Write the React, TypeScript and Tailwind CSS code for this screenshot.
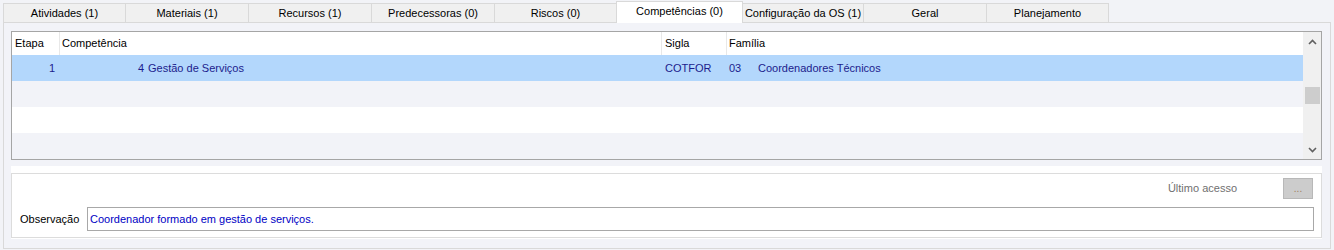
const tabs = [
  { label: "Atividades (1)", w: "w-[123px]" },
  { label: "Materiais (1)", w: "w-[124px]" },
  { label: "Recursos (1)", w: "w-[124px]" },
  { label: "Predecessoras (0)", w: "w-[124px]" },
  { label: "Riscos (0)", w: "w-[123px]" },
  { label: "Competências (0)", w: "w-[127px]", active: true },
  { label: "Configuração da OS (1)", w: "w-[122px]" },
  { label: "Geral", w: "w-[124px]" },
  { label: "Planejamento", w: "w-[123px]" },
]

function Chevron({ up }: { up?: boolean }) {
  return (
    <svg width="9" height="6" viewBox="0 0 9 6">
      <polyline
        points={up ? "1,5 4.5,1.5 8,5" : "1,1 4.5,4.5 8,1"}
        fill="none"
        stroke="#606060"
        strokeWidth="1.6"
      />
    </svg>
  )
}

export default function App() {
  return (
    <div className="w-[1334px] h-[250px] bg-[#f2f3f7] text-[11px] leading-none text-black font-['Liberation_Sans',Arial,sans-serif]">
      {/* Tabs */}
      <div className="flex items-end h-[22px] pl-[3px]">
        {tabs.map((tab, i) => (
          <div
            key={tab.label}
            className={`${tab.w} ${i > 0 ? "-ml-px" : ""} flex items-center justify-center border border-b-0 ${
              tab.active
                ? "relative z-10 h-[22px] -mb-px bg-white border-[#d9d9d9] pb-[3px]"
                : "h-[19px] bg-[#f0f0f0] border-[#d9d9d9]"
            }`}
          >
            {tab.label}
          </div>
        ))}
      </div>

      {/* Panel */}
      <div className="mx-[3px] h-[227px] border border-[#d9d9d9] bg-[#f2f3f8] pt-[8px] pl-[7px]">
        {/* Grid */}
        <div className="w-[1311px] h-[129px] border border-[#a5a5a5] flex">
          <div className="flex-1 flex flex-col">
            <div className="flex h-[23px] bg-white items-center">
              <div className="w-[48px] h-full flex items-center pl-[3px] border-r border-[#e8e8e8]">Etapa</div>
              <div className="w-[602px] h-full flex items-center pl-[2px] border-r border-[#e8e8e8]">Competência</div>
              <div className="w-[65px] h-full flex items-center pl-[3px] border-r border-[#e8e8e8]">Sigla</div>
              <div className="flex-1 h-full flex items-center pl-[2px]">Família</div>
            </div>
            <div className="flex h-[26px] bg-[#b3d7fc] items-center text-[#1c1c8c]">
              <div className="w-[48px] text-right pr-[5px]">1</div>
              <div className="w-[602px] flex">
                <span className="w-[84px] text-right">4</span>
                <span className="ml-[4px]">Gestão de Serviços</span>
              </div>
              <div className="w-[65px] pl-[3px]">COTFOR</div>
              <div className="flex-1 flex pl-[2px]">
                <span className="w-[29px]">03</span>
                <span>Coordenadores Técnicos</span>
              </div>
            </div>
            <div className="h-[26px] bg-[#f2f3f8]" />
            <div className="h-[26px] bg-white" />
            <div className="h-[26px] bg-[#f2f3f8]" />
          </div>
          {/* Scrollbar */}
          <div className="w-[18px] bg-[#f0f0f0] flex flex-col items-center">
            <div className="h-[17px] flex items-center justify-center pt-[2px]">
              <Chevron up />
            </div>
            <div className="mt-[38px] w-[15px] h-[17px] bg-[#cdcdcd]" />
            <div className="flex-1" />
            <div className="h-[17px] flex items-center justify-center pb-[1px]">
              <Chevron />
            </div>
          </div>
        </div>

        {/* Lower area */}
        <div className="mt-[6px] w-[1311px] bg-white pt-[7px] pb-px">
          <div className="h-[65px] border border-[#dcdcdc] pl-[8px] pr-[7px] pt-[4px]">
            <div className="flex items-center justify-end h-[21px] pr-[1px]">
              <span className="text-[#707070] mr-[46px]">Último acesso</span>
              <div className="w-[30px] h-[21px] bg-[#cccccc] border border-[#b8b8b8] flex items-end justify-center pb-[4px] text-[#a08060] text-[10px]">
                ...
              </div>
            </div>
            <div className="flex items-center mt-[8px]">
              <span className="w-[67px]">Observação</span>
              <div className="flex-1 h-[24px] border border-[#a8a8a8] bg-white flex items-center pl-[2px] text-[#0000c4]">
                Coordenador formado em gestão de serviços.
              </div>
            </div>
          </div>
        </div>
      </div>
    </div>
  )
}
